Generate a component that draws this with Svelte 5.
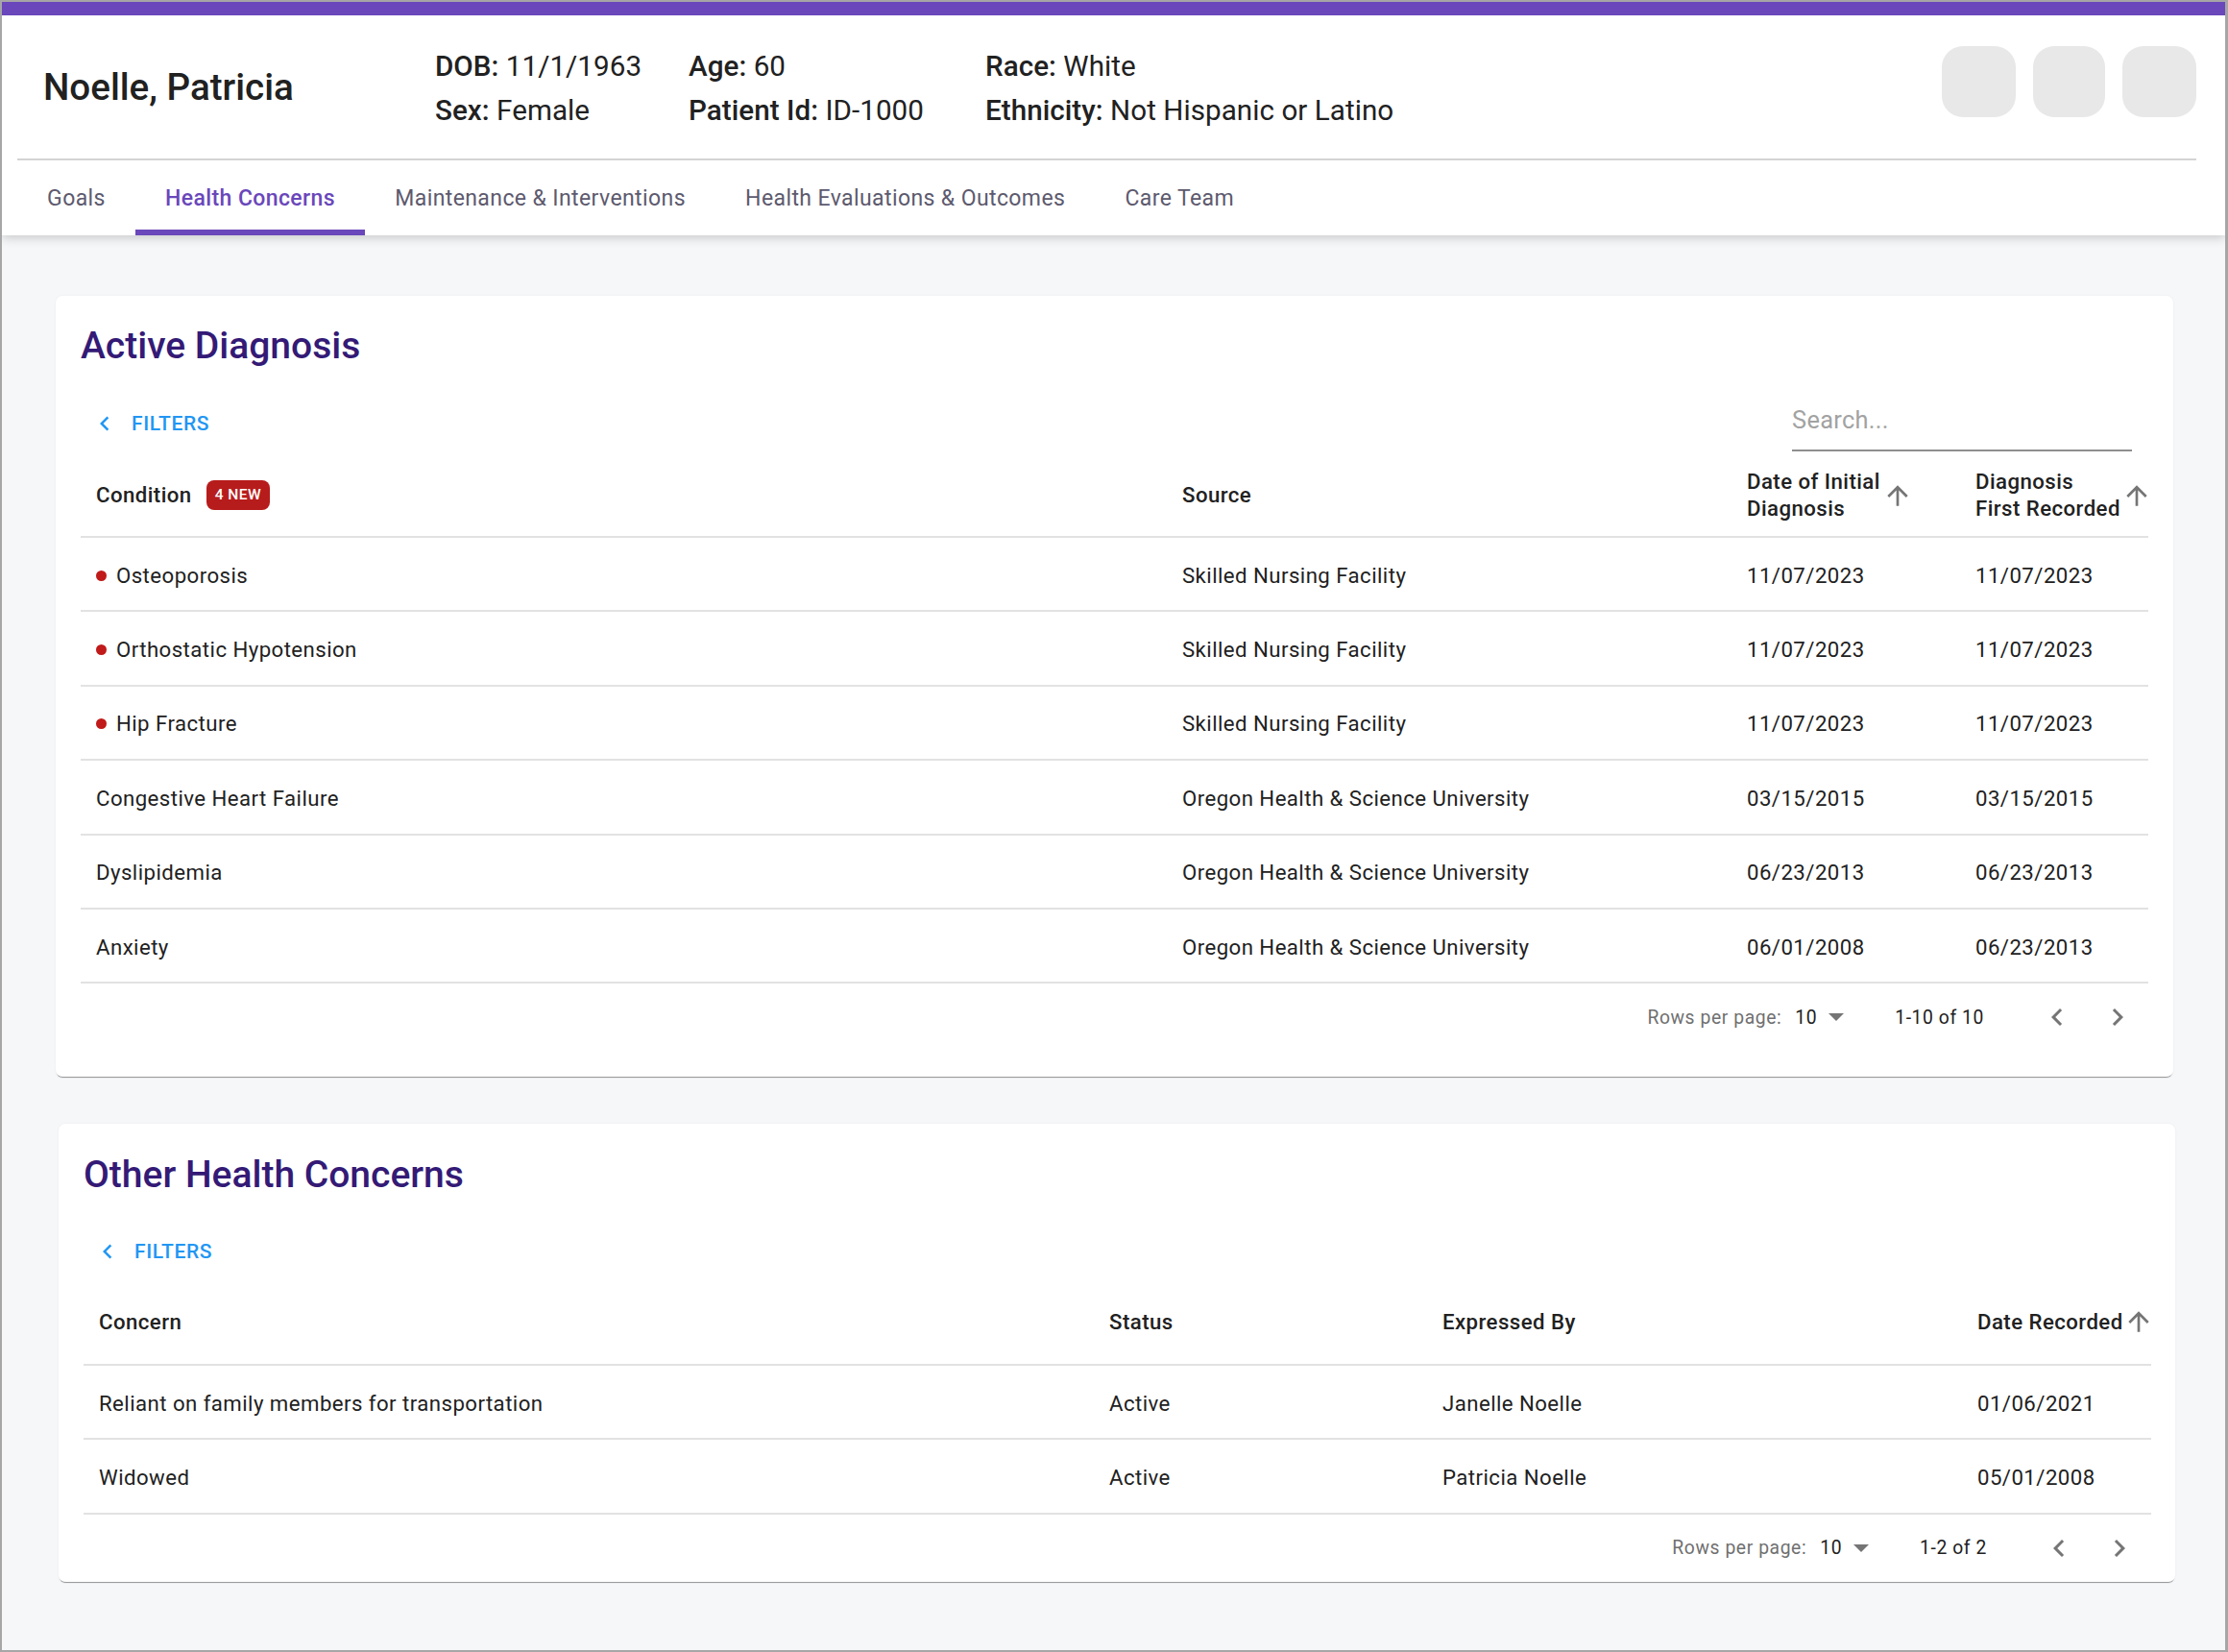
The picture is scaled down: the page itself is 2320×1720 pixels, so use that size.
<script>
    const tabs = ['Goals', 'Health Concerns', 'Maintenance & Interventions', 'Health Evaluations & Outcomes', 'Care Team'];

    const diagnoses = [
        { name: 'Osteoporosis', source: 'Skilled Nursing Facility', initial: '11/07/2023', first: '11/07/2023', isNew: true },
        { name: 'Orthostatic Hypotension', source: 'Skilled Nursing Facility', initial: '11/07/2023', first: '11/07/2023', isNew: true },
        { name: 'Hip Fracture', source: 'Skilled Nursing Facility', initial: '11/07/2023', first: '11/07/2023', isNew: true },
        { name: 'Congestive Heart Failure', source: 'Oregon Health & Science University', initial: '03/15/2015', first: '03/15/2015' },
        { name: 'Dyslipidemia', source: 'Oregon Health & Science University', initial: '06/23/2013', first: '06/23/2013' },
        { name: 'Anxiety', source: 'Oregon Health & Science University', initial: '06/01/2008', first: '06/23/2013' }
    ];

    const concerns = [
        { concern: 'Reliant on family members for transportation', status: 'Active', by: 'Janelle Noelle', date: '01/06/2021' },
        { concern: 'Widowed', status: 'Active', by: 'Patricia Noelle', date: '05/01/2008' }
    ];
</script>

{#snippet arrow()}
    <svg class="sort" viewBox="0 0 24 24" width="32" height="32"><path d="M4 12l1.41 1.41L11 7.83V20h2V7.83l5.58 5.59L20 12l-8-8-8 8z" /></svg>
{/snippet}

{#snippet filters()}
    <div class="filters">
        <svg viewBox="0 0 24 24" width="30" height="30"><path d="M15.41 7.41 14 6l-6 6 6 6 1.41-1.41L10.83 12z" /></svg>
        <span>FILTERS</span>
    </div>
{/snippet}

{#snippet pager(label)}
    <div class="pager">
        <span class="rows">Rows per page:</span>
        <span class="size">10</span>
        <svg class="caret" viewBox="0 0 16 8" width="16" height="8"><path d="M0 0h16L8 8z" /></svg>
        <span class="count">{label}</span>
        <svg class="nav prev" viewBox="0 0 24 24" width="36" height="36"><path d="M15.41 7.41 14 6l-6 6 6 6 1.41-1.41L10.83 12z" /></svg>
        <svg class="nav next" viewBox="0 0 24 24" width="36" height="36"><path d="M10 6 8.59 7.41 13.17 12l-4.58 4.59L10 18l6-6z" /></svg>
    </div>
{/snippet}

<div class="page">
    <header>
        <div class="patient">
            <h1>Noelle, Patricia</h1>
            <div class="demo">
                <div class="col dob">
                    <p><b>DOB:</b> 11/1/1963</p>
                    <p><b>Sex:</b> Female</p>
                </div>
                <div class="col age">
                    <p><b>Age:</b> 60</p>
                    <p><b>Patient Id:</b> ID-1000</p>
                </div>
                <div class="col">
                    <p><b>Race:</b> White</p>
                    <p><b>Ethnicity:</b> Not Hispanic or Latino</p>
                </div>
            </div>
            <div class="actions">
                <span></span>
                <span class="mid"></span>
                <span></span>
            </div>
        </div>
        <nav>
            {#each tabs as tab, i}
                <div class="tab" class:active={i === 1}>{tab}</div>
            {/each}
        </nav>
    </header>

    <main>
        <section class="card first">
            <h2>Active Diagnosis</h2>
            <div class="toolbar">
                {@render filters()}
                <div class="search">Search...</div>
            </div>
            <table>
                <colgroup>
                    <col style="width: 1131px" />
                    <col style="width: 588px" />
                    <col style="width: 238px" />
                    <col />
                </colgroup>
                <thead>
                    <tr>
                        <th><span class="cond">Condition <span class="badge">4 NEW</span></span></th>
                        <th>Source</th>
                        <th><span class="sorted">Date of Initial<br />Diagnosis{@render arrow()}</span></th>
                        <th><span class="sorted">Diagnosis<br />First Recorded{@render arrow()}</span></th>
                    </tr>
                </thead>
                <tbody>
                    {#each diagnoses as d}
                        <tr>
                            <td>{#if d.isNew}<i class="dot"></i>{/if}{d.name}</td>
                            <td>{d.source}</td>
                            <td>{d.initial}</td>
                            <td>{d.first}</td>
                        </tr>
                    {/each}
                </tbody>
            </table>
            {@render pager('1-10 of 10')}
        </section>

        <section class="card second">
            <h2>Other Health Concerns</h2>
            <div class="toolbar">
                {@render filters()}
            </div>
            <table>
                <colgroup>
                    <col style="width: 1052px" />
                    <col style="width: 347px" />
                    <col style="width: 557px" />
                    <col />
                </colgroup>
                <thead>
                    <tr>
                        <th>Concern</th>
                        <th>Status</th>
                        <th>Expressed By</th>
                        <th><span class="sorted">Date Recorded{@render arrow()}</span></th>
                    </tr>
                </thead>
                <tbody>
                    {#each concerns as c}
                        <tr>
                            <td>{c.concern}</td>
                            <td>{c.status}</td>
                            <td>{c.by}</td>
                            <td>{c.date}</td>
                        </tr>
                    {/each}
                </tbody>
            </table>
            {@render pager('1-2 of 2')}
        </section>
    </main>
</div>

<style>
    :global(body) {
        margin: 0;
        font-family: Roboto, sans-serif;
        color: #212121;
        background: #f6f7f9;
    }

    .page {
        box-sizing: border-box;
        width: 2320px;
        height: 1720px;
        border: solid #a6a6a6;
        border-width: 2px 3px 2px 2px;
        background: #f6f7f9;
        overflow: hidden;
    }

    header {
        background: #fff;
        border-top: 14px solid #6a47bb;
        box-shadow: 0 3px 10px rgba(0, 0, 0, 0.18);
        padding: 0 30px 0 16px;
        position: relative;
    }

    .patient {
        display: flex;
        align-items: flex-start;
        height: 149px;
        border-bottom: 2px solid #d4d4d4;
    }

    h1 {
        margin: 0;
        width: 435px;
        padding: 50px 0 0 27px;
        box-sizing: border-box;
        font-size: 38.6px;
        line-height: 50px;
        font-weight: 500;
    }

    .demo {
        display: flex;
        padding-top: 30px;
        flex: 1;
    }

    .demo p {
        margin: 0;
        font-size: 29.6px;
        line-height: 46px;
        letter-spacing: 0.05px;
        white-space: nowrap;
    }

    .demo b {
        font-weight: 500;
    }

    .dob {
        width: 264px;
    }

    .age {
        width: 309px;
    }

    .actions {
        display: flex;
        gap: 18px;
        padding-top: 32px;
    }

    .actions span {
        width: 77px;
        height: 74px;
        border-radius: 22px;
        background: #e8e8e8;
    }

    .actions .mid {
        width: 75px;
    }

    nav {
        display: flex;
        height: 78px;
    }

    .tab {
        box-sizing: border-box;
        padding: 25px 31.1px 0;
        font-size: 23px;
        line-height: 30px;
        letter-spacing: 0.4px;
        color: #5d5a6e;
        white-space: nowrap;
    }

    .tab.active {
        color: #6a47bb;
        font-weight: 500;
        border-bottom: 6px solid #6a47bb;
    }

    main {
        padding: 0 0 0 56px;
    }

    .card {
        position: relative;
        box-sizing: border-box;
        background: #fff;
        border-radius: 7px;
        box-shadow: 0 2px 1px -1px rgba(0, 0, 0, 0.4), 0 0 3px rgba(0, 0, 0, 0.05);
        padding: 0 26px;
    }

    .first {
        width: 2205px;
        height: 813px;
        margin-top: 63px;
    }

    .second {
        width: 2204px;
        height: 477px;
        margin: 49px 0 0 3px;
    }

    h2 {
        margin: 0;
        padding-top: 29px;
        font-size: 39px;
        line-height: 46px;
        font-weight: 500;
        color: #341a76;
    }

    .second h2 {
        padding-top: 30px;
    }

    .toolbar {
        display: flex;
        justify-content: space-between;
        height: 90px;
    }

    .second .toolbar {
        height: 85px;
    }

    .filters {
        display: flex;
        align-items: center;
        height: 36px;
        margin-top: 40px;
        padding-left: 10px;
        color: #2196f3;
        font-size: 21px;
        font-weight: 500;
        letter-spacing: 0.6px;
    }

    .second .filters {
        margin-top: 39px;
    }

    .filters svg {
        fill: #2196f3;
        margin-right: 13px;
    }

    .search {
        box-sizing: border-box;
        width: 354px;
        height: 65px;
        margin: 22px 17px 0 0;
        padding-top: 16px;
        border-bottom: 2px solid #8f8f8f;
        font-size: 25.4px;
        line-height: 32px;
        letter-spacing: 0.3px;
        color: #a2a2a2;
    }

    table {
        width: 2153px;
        table-layout: fixed;
        border-collapse: collapse;
    }

    .first table {
        margin-top: -2px;
    }

    th,
    td {
        padding: 0 0 0 16px;
        border-bottom: 2px solid #e2e2e2;
        font-size: 22.2px;
        line-height: 28px;
        letter-spacing: 0.45px;
        text-align: left;
        white-space: nowrap;
    }

    th {
        font-weight: 500;
        height: 87px;
    }

    .second th {
        height: 89px;
    }

    td {
        height: 77.4px;
        padding-top: 2px;
        box-sizing: border-box;
        font-weight: 400;
    }

    .cond {
        display: flex;
        align-items: center;
        gap: 15px;
    }

    .badge {
        box-sizing: border-box;
        height: 31px;
        margin-top: 2px;
        padding: 0 9px;
        border-radius: 8px;
        background: #b71c1c;
        color: #fff;
        font-size: 15.5px;
        line-height: 31px;
        letter-spacing: 0.5px;
    }

    .dot {
        display: inline-block;
        width: 11px;
        height: 11px;
        margin-right: 10px;
        border-radius: 50%;
        background: #c11a1a;
        vertical-align: 2px;
    }

    .sorted {
        position: relative;
        display: inline-block;
    }

    .sort {
        position: absolute;
        right: -34px;
        top: 50%;
        margin-top: -15px;
        fill: #757575;
    }

    th:last-child .sorted .sort {
        right: -33px;
    }

    .second th:last-child .sorted .sort {
        right: -32px;
        margin-top: -16px;
    }

    .pager {
        display: flex;
        align-items: center;
        justify-content: flex-end;
        height: 70px;
        padding-right: 14px;
        font-size: 19.3px;
        letter-spacing: 0.6px;
        white-space: nowrap;
    }

    .rows {
        color: #707070;
    }

    .size {
        margin-left: 14px;
        color: #212121;
    }

    .caret {
        margin-left: 12px;
        fill: #757575;
    }

    .count {
        margin-left: 53px;
        color: #212121;
    }

    .nav {
        fill: #757575;
    }

    .prev {
        margin-left: 58px;
    }

    .next {
        margin-left: 27px;
    }

    .second .prev {
        margin-left: 57px;
    }
</style>
